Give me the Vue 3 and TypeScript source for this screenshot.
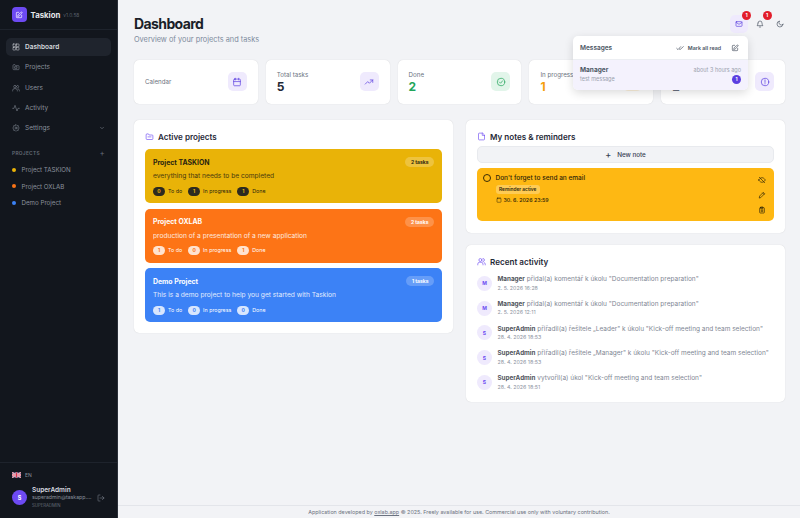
<script setup lang="ts">
interface NavItem {
  label: string
  icon: string
  active?: boolean
  chevron?: boolean
}

interface Stat {
  label: string
  value?: string
  valueClass?: string
  iconClass: string
  icon: string
}

interface Project {
  name: string
  description: string
  tasks: string
  todo: number
  progress: number
  done: number
  theme: string
}

interface Activity {
  initial: string
  user: string
  text: string
  date: string
}

const navItems: NavItem[] = [
  { label: 'Dashboard', icon: 'grid', active: true },
  { label: 'Projects', icon: 'folder' },
  { label: 'Users', icon: 'users' },
  { label: 'Activity', icon: 'pulse' },
  { label: 'Settings', icon: 'gear', chevron: true },
]

const sideProjects = [
  { name: 'Project TASKION', color: '#eab308' },
  { name: 'Project OXLAB', color: '#f97316' },
  { name: 'Demo Project', color: '#3b82f6' },
]

const stats: Stat[] = [
  { label: 'Calendar', iconClass: 'violet', icon: 'calendar' },
  { label: 'Total tasks', value: '5', iconClass: 'violet', icon: 'trend' },
  { label: 'Done', value: '2', valueClass: 'green', iconClass: 'mint', icon: 'check' },
  { label: 'In progress', value: '1', valueClass: 'orange', iconClass: 'cream', icon: 'clock' },
  { label: 'Overdue', value: '2', valueClass: 'grey', iconClass: 'violet', icon: 'alert' },
]

const projects: Project[] = [
  { name: 'Project TASKION', description: 'everything that needs to be completed', tasks: '2 tasks', todo: 0, progress: 1, done: 1, theme: 'yellow' },
  { name: 'Project OXLAB', description: 'production of a presentation of a new application', tasks: '2 tasks', todo: 1, progress: 0, done: 1, theme: 'tangerine' },
  { name: 'Demo Project', description: 'This is a demo project to help you get started with Taskion', tasks: '1 tasks', todo: 1, progress: 0, done: 0, theme: 'blue' },
]

const activities: Activity[] = [
  { initial: 'M', user: 'Manager', text: 'přidal(a) komentář k úkolu "Documentation preparation"', date: '2. 5. 2026 16:28' },
  { initial: 'M', user: 'Manager', text: 'přidal(a) komentář k úkolu "Documentation preparation"', date: '2. 5. 2026 12:11' },
  { initial: 'S', user: 'SuperAdmin', text: 'přiřadil(a) řešitele „Leader" k úkolu "Kick-off meeting and team selection"', date: '28. 4. 2026 18:53' },
  { initial: 'S', user: 'SuperAdmin', text: 'přiřadil(a) řešitele „Manager" k úkolu "Kick-off meeting and team selection"', date: '28. 4. 2026 18:53' },
  { initial: 'S', user: 'SuperAdmin', text: 'vytvořil(a) úkol "Kick-off meeting and team selection"', date: '28. 4. 2026 18:51' },
]
</script>

<template>
  <div class="app">
    <aside class="sidebar">
      <div class="brand">
        <div class="logo">
          <svg viewBox="0 0 24 24" class="logo-icon"><path d="M11 4H6a2 2 0 0 0-2 2v12a2 2 0 0 0 2 2h12a2 2 0 0 0 2-2v-5" /><path d="M18.500 3.500a2 2 0 0 1 2.800 2.800L12 15.500l-4 1 1-4z" /></svg>
        </div>
        <span class="brand-name">Taskion</span>
        <span class="version">v1.0.58</span>
      </div>

      <nav class="nav">
        <div v-for="item in navItems" :key="item.label" class="nav-item" :class="{ active: item.active }">
          <svg viewBox="0 0 24 24" class="nav-icon">
            <template v-if="item.icon === 'grid'">
              <rect x="3" y="3" width="8" height="8" rx="1" /><rect x="13" y="3" width="8" height="8" rx="1" /><rect x="3" y="13" width="8" height="8" rx="1" /><rect x="13" y="13" width="8" height="8" rx="1" />
            </template>
            <template v-else-if="item.icon === 'folder'">
              <path d="M3 7a2 2 0 0 1 2-2h4l2 3h8a2 2 0 0 1 2 2v8a2 2 0 0 1-2 2H5a2 2 0 0 1-2-2z" /><rect x="9" y="11" width="6" height="5" />
            </template>
            <template v-else-if="item.icon === 'users'">
              <circle cx="9" cy="8" r="4" /><path d="M2 21v-2a5 5 0 0 1 5-5h4a5 5 0 0 1 5 5v2M16 4a4 4 0 0 1 0 8M22 21v-2a5 5 0 0 0-3-4.500" />
            </template>
            <template v-else-if="item.icon === 'pulse'">
              <path d="M2 13h4l3-9 6 17 3-8h4" />
            </template>
            <template v-else>
              <circle cx="12" cy="12" r="3" /><path d="M12 2l3 3h4v4l3 3-3 3v4h-4l-3 3-3-3H5v-4l-3-3 3-3V5h4z" />
            </template>
          </svg>
          <span>{{ item.label }}</span>
          <svg v-if="item.chevron" viewBox="0 0 24 24" class="chevron"><path d="M6 9l6 6 6-6" /></svg>
        </div>
      </nav>

      <div class="side-title"><span>PROJECTS</span><span class="side-plus">+</span></div>
      <div v-for="p in sideProjects" :key="p.name" class="side-project">
        <i class="dot" :style="{ background: p.color }"></i>{{ p.name }}
      </div>

      <div class="side-bottom">
        <div class="lang">
          <svg viewBox="0 0 20 12" class="flag">
            <rect width="20" height="12" fill="#5a4a78" stroke="none" />
            <path d="M0 0l20 12M20 0L0 12" stroke="#fff" stroke-width="2.400" />
            <path d="M0 0l20 12M20 0L0 12" stroke="#d9405c" stroke-width="1.200" />
            <path d="M10 0v12M0 6h20" stroke="#fff" stroke-width="4" />
            <path d="M10 0v12M0 6h20" stroke="#d9324f" stroke-width="2.400" />
          </svg>
          EN
        </div>
        <div class="account">
          <div class="avatar">S</div>
          <div class="account-text">
            <div class="account-name">SuperAdmin</div>
            <div class="account-mail">superadmin@taskapp....</div>
            <div class="account-role">SUPERADMIN</div>
          </div>
          <svg viewBox="0 0 24 24" class="logout"><path d="M9 21H5a2 2 0 0 1-2-2V5a2 2 0 0 1 2-2h4M16 17l5-5-5-5M21 12H9" /></svg>
        </div>
      </div>
    </aside>

    <div class="main">
      <div class="content">
        <header class="header">
          <div>
            <h1>Dashboard</h1>
            <p>Overview of your projects and tasks</p>
          </div>
          <div class="tools">
            <div class="tool tool-on">
              <svg viewBox="0 0 24 24"><rect x="3" y="5" width="18" height="14" rx="2" /><path d="M3 7l9 6 9-6" /></svg>
              <b class="badge">1</b>
            </div>
            <div class="tool">
              <svg viewBox="0 0 24 24"><path d="M6 9a6 6 0 0 1 12 0c0 6 3 8 3 8H3s3-2 3-8M10 21h4" /></svg>
              <b class="badge">1</b>
            </div>
            <div class="tool">
              <svg viewBox="0 0 24 24"><path d="M21 13A9 9 0 1 1 11 3a7 7 0 0 0 10 10z" /></svg>
            </div>
          </div>
        </header>

        <section class="stats">
          <div v-for="s in stats" :key="s.label" class="stat">
            <div>
              <div class="stat-label">{{ s.label }}</div>
              <div v-if="s.value" class="stat-value" :class="s.valueClass">{{ s.value }}</div>
            </div>
            <div class="stat-icon" :class="s.iconClass">
              <svg viewBox="0 0 24 24">
                <template v-if="s.icon === 'calendar'">
                  <rect x="4" y="5" width="16" height="16" rx="2" /><path d="M8 3v4M16 3v4M4 11h16" />
                </template>
                <template v-else-if="s.icon === 'trend'">
                  <path d="M3 17l6-6 4 4 8-8M15 7h6v6" />
                </template>
                <template v-else-if="s.icon === 'check'">
                  <circle cx="12" cy="12" r="9" /><path d="M8 12l3 3 5-6" />
                </template>
                <template v-else-if="s.icon === 'clock'">
                  <circle cx="12" cy="12" r="9" /><path d="M12 7v5l3 2" />
                </template>
                <template v-else>
                  <circle cx="12" cy="12" r="9" /><path d="M12 7v6M12 16v.5" />
                </template>
              </svg>
            </div>
          </div>
        </section>

        <div class="columns">
          <section class="panel">
            <h2>
              <svg viewBox="0 0 24 24" class="title-icon"><path d="M3 7a2 2 0 0 1 2-2h4l2 3h8a2 2 0 0 1 2 2v8a2 2 0 0 1-2 2H5a2 2 0 0 1-2-2z" /><path d="M8 13h8" /></svg>
              Active projects
            </h2>
            <div class="project-list">
              <article v-for="p in projects" :key="p.name" class="project" :class="p.theme">
                <div class="project-top">
                  <h3>{{ p.name }}</h3>
                  <span class="tasks">{{ p.tasks }}</span>
                </div>
                <p>{{ p.description }}</p>
                <div class="counts">
                  <span><b>{{ p.todo }}</b>To do</span>
                  <span><b>{{ p.progress }}</b>In progress</span>
                  <span><b>{{ p.done }}</b>Done</span>
                </div>
              </article>
            </div>
          </section>

          <div class="right">
            <section class="panel">
              <h2>
                <svg viewBox="0 0 24 24" class="title-icon"><path d="M14 3H6a2 2 0 0 0-2 2v14a2 2 0 0 0 2 2h12a2 2 0 0 0 2-2V9zM14 3v6h6" /></svg>
                My notes &amp; reminders
              </h2>
              <button class="new-note"><span>+</span>New note</button>
              <div class="note">
                <i class="note-circle"></i>
                <div class="note-body">
                  <div class="note-title">Don't forget to send an email</div>
                  <div class="reminder">Reminder active</div>
                  <div class="note-date">
                    <svg viewBox="0 0 24 24"><rect x="4" y="5" width="16" height="16" rx="2" /><path d="M8 3v4M16 3v4" /></svg>
                    30. 6. 2026 23:59
                  </div>
                </div>
                <div class="note-actions">
                  <svg viewBox="0 0 24 24"><path d="M2 12s4-7 10-7 10 7 10 7-4 7-10 7-10-7-10-7zM4 4l16 16" /></svg>
                  <svg viewBox="0 0 24 24"><path d="M4 20l1-5L16 4l4 4L9 19zM14 6l4 4" /></svg>
                  <svg viewBox="0 0 24 24"><rect x="5" y="5" width="14" height="16" rx="2" /><path d="M9 3h6v4H9zM10 11v6M14 11v6" /></svg>
                </div>
              </div>
            </section>

            <section class="panel">
              <h2>
                <svg viewBox="0 0 24 24" class="title-icon"><circle cx="9" cy="8" r="4" /><path d="M2 21v-2a5 5 0 0 1 5-5h4a5 5 0 0 1 5 5v2M16 4a4 4 0 0 1 0 8M22 21v-2a5 5 0 0 0-3-4.500" /></svg>
                Recent activity
              </h2>
              <div class="activity-list">
                <div v-for="(a, i) in activities" :key="i" class="activity">
                  <div class="activity-avatar">{{ a.initial }}</div>
                  <div>
                    <div class="activity-text"><b>{{ a.user }}</b> {{ a.text }}</div>
                    <div class="activity-date">{{ a.date }}</div>
                  </div>
                </div>
              </div>
            </section>
          </div>
        </div>
      </div>

      <footer class="footer">
        Application developed by <u>oxlab.app</u> © 2025. Freely available for use. Commercial use only with voluntary contribution.
      </footer>

      <div class="messages">
        <div class="messages-head">
          <strong>Messages</strong>
          <span class="mark">
            <svg viewBox="0 0 24 24"><path d="M2 13l4 4 8-9M10 15l2 2 10-9" /></svg>
            Mark all read
          </span>
          <svg viewBox="0 0 24 24" class="compose"><path d="M11 4H6a2 2 0 0 0-2 2v12a2 2 0 0 0 2 2h12a2 2 0 0 0 2-2v-5" /><path d="M18.500 3.500a2 2 0 0 1 2.800 2.800L12 15.500l-4 1 1-4z" /></svg>
        </div>
        <div class="message">
          <div class="message-row">
            <strong>Manager</strong>
            <span>about 3 hours ago</span>
          </div>
          <div class="message-row">
            <span>test message</span>
            <b class="message-count">1</b>
          </div>
        </div>
      </div>
    </div>
  </div>
</template>

<style scoped>
.app {
  display: flex;
  width: 800px;
  height: 518px;
  overflow: hidden;
  font-family: Inter, 'Noto Sans', sans-serif;
  background: #f2f3f6;
  color: #1f2937;
}

svg {
  fill: none;
  stroke: currentColor;
  stroke-width: 2;
  stroke-linecap: round;
  stroke-linejoin: round;
}

.sidebar {
  width: 118px;
  box-sizing: border-box;
  flex-shrink: 0;
  display: flex;
  flex-direction: column;
  background: #12161d;
  color: #8a919c;
  font-size: 6.500px;
  border-right: 1px solid #2a2f38;
}

.brand {
  display: flex;
  align-items: center;
  height: 29px;
  padding-left: 12px;
  border-bottom: 1px solid #1e232c;
}

.logo {
  width: 14.500px;
  height: 14.500px;
  border-radius: 4px;
  background: #6d4af2;
  color: #fff;
  display: flex;
  align-items: center;
  justify-content: center;
}

.logo-icon {
  width: 8px;
  height: 8px;
}

.brand-name {
  margin-left: 4px;
  font-size: 7.800px;
  font-weight: 700;
  color: #e5e7eb;
}

.version {
  margin-left: 3px;
  font-size: 4.800px;
  color: #5b626d;
}

.nav {
  padding: 8px 6px 0;
  display: flex;
  flex-direction: column;
  gap: 2px;
}

.nav-item {
  height: 18.250px;
  display: flex;
  align-items: center;
  gap: 5px;
  padding: 0 6px;
  border-radius: 5px;
}

.nav-item.active {
  background: #1f242d;
  color: #d5d8dd;
  font-weight: 600;
}

.nav-icon {
  width: 8px;
  height: 8px;
  stroke-width: 1.600;
}

.chevron {
  width: 6px;
  height: 6px;
  margin-left: auto;
}

.side-title {
  display: flex;
  justify-content: space-between;
  align-items: center;
  margin-top: 11px;
  padding: 0 12px;
  height: 10px;
  font-size: 4.800px;
  font-weight: 600;
  letter-spacing: 0.3px;
  color: #656c77;
}

.side-plus {
  font-size: 8px;
  font-weight: 400;
}

.side-project {
  display: flex;
  align-items: center;
  height: 16.500px;
  padding-left: 12px;
  font-size: 6.200px;
}

.side-title + .side-project {
  margin-top: 3px;
}

.dot {
  width: 4px;
  height: 4px;
  border-radius: 50%;
  margin-right: 5.500px;
}

.side-bottom {
  margin-top: auto;
  border-top: 1px solid #1e232c;
  padding: 9px 12px 9px;
}

.lang {
  display: flex;
  align-items: center;
  gap: 4px;
  height: 6.500px;
  font-size: 5px;
}

.flag {
  width: 9px;
  height: 6px;
  stroke-linecap: butt;
}

.account {
  display: flex;
  align-items: center;
  margin-top: 8px;
}

.avatar {
  width: 15px;
  height: 15px;
  border-radius: 50%;
  background: #6d4af2;
  color: #fff;
  font-size: 5.500px;
  font-weight: 700;
  display: flex;
  align-items: center;
  justify-content: center;
  flex-shrink: 0;
}

.account-text {
  margin-left: 5px;
  min-width: 0;
  line-height: 7.500px;
}

.account-name {
  font-size: 6.500px;
  font-weight: 600;
  color: #d9dce1;
}

.account-mail {
  font-size: 5.200px;
  color: #8a919c;
  white-space: nowrap;
}

.account-role {
  font-size: 4.300px;
  color: #656c77;
}

.logout {
  width: 8px;
  height: 8px;
  margin-left: auto;
  stroke-width: 1.500;
}

.main {
  position: relative;
  flex: 1;
  min-width: 0;
  display: flex;
  flex-direction: column;
}

.content {
  flex: 1;
  min-height: 0;
  padding: 14px 15px 0 16px;
}

.header {
  display: flex;
  justify-content: space-between;
  height: 46px;
}

h1 {
  margin: 0;
  font-size: 14px;
  line-height: 19px;
  font-weight: 700;
  letter-spacing: -0.6px;
  color: #1a1f29;
}

.header p {
  margin: 2px 0 0;
  font-size: 7.350px;
  line-height: 9px;
  color: #7d8a9c;
}

.tools {
  display: flex;
  align-items: flex-start;
  gap: 2.500px;
  margin-right: -4px;
}

.tool {
  position: relative;
  width: 18px;
  height: 18px;
  margin-top: 1px;
  border-radius: 5px;
  color: #4b5563;
  display: flex;
  align-items: center;
  justify-content: center;
}

.tool svg {
  width: 8px;
  height: 8px;
}

.tool-on {
  background: #efeafd;
  color: #5b3fe0;
}

.badge {
  position: absolute;
  top: -4px;
  right: -3px;
  width: 9px;
  height: 9px;
  border-radius: 50%;
  background: #e21d2b;
  color: #fff;
  font-size: 5px;
  line-height: 9px;
  text-align: center;
}

.stats {
  display: grid;
  grid-template-columns: repeat(5, 1fr);
  gap: 8px;
}

.stat {
  height: 43.500px;
  box-sizing: border-box;
  padding: 0 11px;
  background: #fff;
  border-radius: 5px;
  box-shadow: 0 0 1px rgba(0, 0, 0, 0.18);
  display: flex;
  align-items: center;
  justify-content: space-between;
}

.stat-label {
  font-size: 6.200px;
  color: #6b7280;
}

.stat-value {
  margin-top: 2px;
  font-size: 12px;
  line-height: 13px;
  font-weight: 700;
}

.stat-value.green { color: #22a55b; }
.stat-value.orange { color: #f59e0b; }
.stat-value.grey { color: #6b7280; }

.stat-icon {
  width: 19px;
  height: 19px;
  border-radius: 5px;
  display: flex;
  align-items: center;
  justify-content: center;
}

.stat-icon svg {
  width: 10px;
  height: 10px;
  stroke-width: 1.700;
}

.stat-icon.violet { background: #efeafd; color: #5b3fe0; }
.stat-icon.mint { background: #e2f5ea; color: #22a55b; }
.stat-icon.cream { background: #fdf2dc; color: #f59e0b; }

.columns {
  display: grid;
  grid-template-columns: 1fr 1fr;
  gap: 13px;
  margin-top: 16.500px;
  align-items: start;
}

.right {
  display: flex;
  flex-direction: column;
  gap: 12px;
}

.panel {
  background: #fff;
  border-radius: 5px;
  box-shadow: 0 0 1px rgba(0, 0, 0, 0.18);
  padding: 11px;
}

h2 {
  margin: 0 0 7px;
  display: flex;
  align-items: center;
  gap: 4px;
  height: 11px;
  font-size: 8.100px;
  font-weight: 600;
  color: #1f2937;
}

.title-icon {
  width: 9px;
  height: 9px;
  color: #6d4af2;
  stroke-width: 1.700;
}

.project-list {
  display: flex;
  flex-direction: column;
  gap: 5.500px;
}

.project {
  height: 54px;
  box-sizing: border-box;
  padding: 8px 8px 0;
  border-radius: 5px;
  color: #fff;
}

.project.yellow { background: #e9b308; color: #2a2410; }
.project.tangerine { background: #fd7416; }
.project.blue { background: #3c82f6; }

.project-top {
  display: flex;
  justify-content: space-between;
  align-items: center;
  height: 10px;
}

h3 {
  margin: 0;
  font-size: 6.900px;
  font-weight: 700;
}

.tasks {
  padding: 0 5.500px;
  height: 10px;
  line-height: 10px;
  border-radius: 5px;
  font-size: 5px;
  font-weight: 700;
  background: rgba(255, 255, 255, 0.22);
}

.project p {
  margin: 5px 0 0;
  font-size: 6.650px;
  line-height: 9px;
  opacity: 0.85;
}

.counts {
  display: flex;
  gap: 6px;
  margin-top: 5.500px;
  font-size: 5.300px;
  line-height: 9px;
}

.counts span {
  display: flex;
  align-items: center;
  gap: 3px;
}

.counts b {
  min-width: 12px;
  height: 9px;
  line-height: 9px;
  text-align: center;
  border-radius: 4.500px;
  font-size: 5px;
  background: rgba(255, 255, 255, 0.8);
  color: inherit;
}

.yellow .counts b {
  background: #2c2a20;
  color: #e9b308;
}

.tangerine .counts b { color: #fd7416; }
.blue .counts b { color: #3c82f6; }

.new-note {
  display: flex;
  width: 100%;
  height: 17px;
  margin-top: -3px;
  align-items: center;
  justify-content: center;
  gap: 6px;
  padding: 0;
  border: 1px solid #e8eaee;
  border-radius: 5px;
  background: #f2f3f6;
  color: #374151;
  font-family: inherit;
  font-size: 6.300px;
  font-weight: 500;
}

.new-note span {
  font-size: 9px;
  line-height: 9px;
}

.note {
  display: flex;
  margin: 5px 0 1px;
  height: 53px;
  box-sizing: border-box;
  padding: 6px 8.500px 0 5.500px;
  background: #feb813;
  border-radius: 5px;
  color: #2e2408;
}

.note-circle {
  width: 8px;
  height: 8px;
  box-sizing: border-box;
  border: 0.800px solid #3a2c05;
  border-radius: 50%;
  margin-right: 5px;
  flex-shrink: 0;
}

.note-body {
  flex: 1;
}

.note-title {
  font-size: 6.500px;
  font-weight: 500;
  line-height: 9px;
}

.reminder {
  width: fit-content;
  margin-top: 2px;
  padding: 0 3.500px;
  height: 9px;
  line-height: 9px;
  border-radius: 3px;
  font-size: 4.800px;
  font-weight: 600;
  background: rgba(255, 255, 255, 0.28);
}

.note-date {
  display: flex;
  align-items: center;
  gap: 2px;
  margin-top: 2px;
  font-size: 5.300px;
  line-height: 8px;
  font-weight: 500;
}

.note-date svg {
  width: 6px;
  height: 6px;
}

.note-actions {
  display: flex;
  flex-direction: column;
  gap: 7px;
  padding-top: 2px;
}

.note-actions svg {
  width: 8px;
  height: 8px;
}

.activity-list {
  display: flex;
  flex-direction: column;
  gap: 8.250px;
  margin-top: 8px;
}

.activity {
  display: flex;
  align-items: center;
  gap: 5.500px;
}

.activity-avatar {
  width: 15px;
  height: 15px;
  border-radius: 50%;
  background: #efeafd;
  color: #6d4af2;
  font-size: 5px;
  font-weight: 700;
  display: flex;
  align-items: center;
  justify-content: center;
  flex-shrink: 0;
}

.activity-text {
  font-size: 6.500px;
  line-height: 8.500px;
  color: #7f8794;
  white-space: nowrap;
}

.activity-text b {
  color: #50545c;
  font-size: 6.300px;
  font-weight: 700;
}

.activity-date {
  font-size: 5.300px;
  line-height: 8px;
  color: #8b929e;
}

.footer {
  height: 13px;
  box-sizing: border-box;
  border-top: 1px solid #e3e5ea;
  font-size: 5.400px;
  line-height: 12px;
  text-align: center;
  color: #6b7280;
}

.messages {
  position: absolute;
  top: 36px;
  left: 455px;
  width: 175px;
  background: #fff;
  border-radius: 5px;
  box-shadow: 0 3px 10px rgba(0, 0, 0, 0.14);
  overflow: hidden;
}

.messages-head {
  height: 23px;
  padding: 0 9px 0 7px;
  display: flex;
  align-items: center;
  border-bottom: 1px solid #eceef2;
}

.messages-head strong {
  font-size: 6.500px;
  font-weight: 600;
  color: #4b5563;
}

.mark {
  display: flex;
  align-items: center;
  gap: 4px;
  margin-left: auto;
  font-size: 5.300px;
  font-weight: 600;
  color: #4b5563;
}

.mark svg {
  width: 8px;
  height: 8px;
}

.compose {
  width: 8px;
  height: 8px;
  margin-left: 10px;
  color: #4b5563;
}

.message {
  padding: 6px 7px 6px;
  background: #f4f2fd;
}

.message-row {
  display: flex;
  justify-content: space-between;
  align-items: center;
  font-size: 5.500px;
  line-height: 9px;
  color: #9aa1ad;
}

.message-row strong {
  font-size: 6.500px;
  color: #4b5563;
}

.message-count {
  width: 9px;
  height: 9px;
  border-radius: 50%;
  background: #5b3fe0;
  color: #fff;
  font-size: 4.800px;
  text-align: center;
}
</style>

<style>
html,
body {
  margin: 0;
  background: #f2f3f6;
}
</style>
